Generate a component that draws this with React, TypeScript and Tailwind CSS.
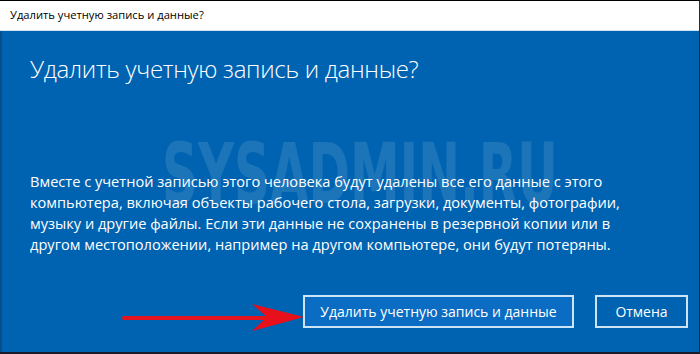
export default function App() {
  return (
    <div className="relative w-[700px] h-[354px] overflow-hidden flex flex-col border-t border-t-black border-r border-r-[#2a2a2a] border-b-2 border-b-[#1a1a2a] font-['Open_Sans',sans-serif]">
      <div className="h-[30px] shrink-0 bg-white flex items-center pl-[10px] text-[11.2px] text-black border-b border-b-[#cfe3f5]">
        Удалить учетную запись и данные?
      </div>

      <div className="relative flex-1 bg-[#0063b1] border-l-2 border-l-[#0a4f8c] pl-[28px] pr-[11px] flex flex-col text-white">
        <div className="pointer-events-none absolute left-[160px] top-[101px] origin-left scale-x-[0.66] text-[84px] leading-none font-bold text-white/[0.11] font-['DejaVu_Sans_Condensed',sans-serif] whitespace-nowrap">
          SYSADMIN.RU
        </div>

        <h1 className="relative mt-[22px] text-[24px] leading-[32px] font-light tracking-[-0.3px] whitespace-nowrap">
          Удалить учетную запись и данные?
        </h1>

        <p className="relative mt-[86px] text-[14.6px] leading-[21px] whitespace-nowrap">
          Вместе с учетной записью этого человека будут удалены все его данные с этого
          <br />
          компьютера, включая объекты рабочего стола, загрузки, документы, фотографии,
          <br />
          музыку и другие файлы. Если эти данные не сохранены в резервной копии или в
          <br />
          другом местоположении, например на другом компьютере, они будут потеряны.
        </p>

        <div className="mt-auto mb-[24px] flex justify-end gap-[21px]">
          <button className="w-[271px] h-[33px] border-2 border-[#cde4f7] bg-[#0a6cc2] text-[14px] text-white">
            Удалить учетную запись и данные
          </button>
          <button className="w-[93px] h-[33px] border-2 border-[#cde4f7] bg-[#0063b1] text-[14px] text-white">
            Отмена
          </button>
        </div>
      </div>

      <svg
        className="pointer-events-none absolute left-0 top-0"
        width="700"
        height="354"
        viewBox="0 0 700 354"
      >
        <line x1="124" y1="317" x2="270" y2="317" stroke="#e3141e" strokeWidth="4" strokeLinecap="round" />
        <polygon points="304,316 252,303 267,316 252,330" fill="#e8101a" />
      </svg>
    </div>
  );
}
